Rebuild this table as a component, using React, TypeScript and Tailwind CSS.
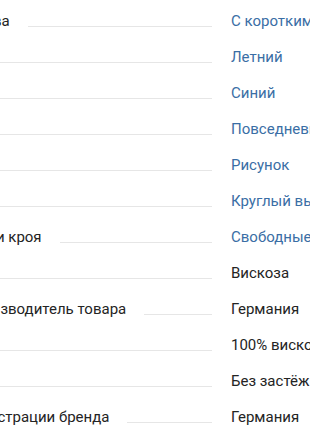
const rows: { label: string; value: string; link?: boolean }[] = [
  { label: "Длина рукава", value: "С коротким рукавом", link: true },
  { label: "Сезон", value: "Летний", link: true },
  { label: "Цвет", value: "Синий", link: true },
  { label: "Стиль", value: "Повседневный", link: true },
  { label: "Узор", value: "Рисунок", link: true },
  { label: "Вырез", value: "Круглый вырез", link: true },
  { label: "Особенности кроя", value: "Свободные", link: true },
  { label: "Материал", value: "Вискоза" },
  { label: "Страна производитель товара", value: "Германия" },
  { label: "Состав", value: "100% вискоза" },
  { label: "Застежка", value: "Без застёжки" },
  { label: "Страна регистрации бренда", value: "Германия" },
];

export default function App() {
  return (
    <div className="h-[430px] w-[310px] overflow-hidden bg-white font-['Roboto',sans-serif] text-[15px] leading-5 text-[#242424]">
      <dl className="ml-[-88px] flex w-[520px] flex-col pt-[11px]">
        {rows.map((r) => (
          <div key={r.label} className="flex h-9 items-baseline">
            <dt className="flex w-[319px] shrink-0 items-baseline">
              <span className="whitespace-nowrap">{r.label}</span>
              <span className="relative top-px ml-[18px] mr-[19px] h-px flex-1 border-b border-[#e6e6e6]" />
            </dt>
            <dd
              className={`whitespace-nowrap ${
                r.link ? "text-[#3a6ea5]" : "text-[#242424]"
              }`}
            >
              {r.value}
            </dd>
          </div>
        ))}
      </dl>
    </div>
  );
}
